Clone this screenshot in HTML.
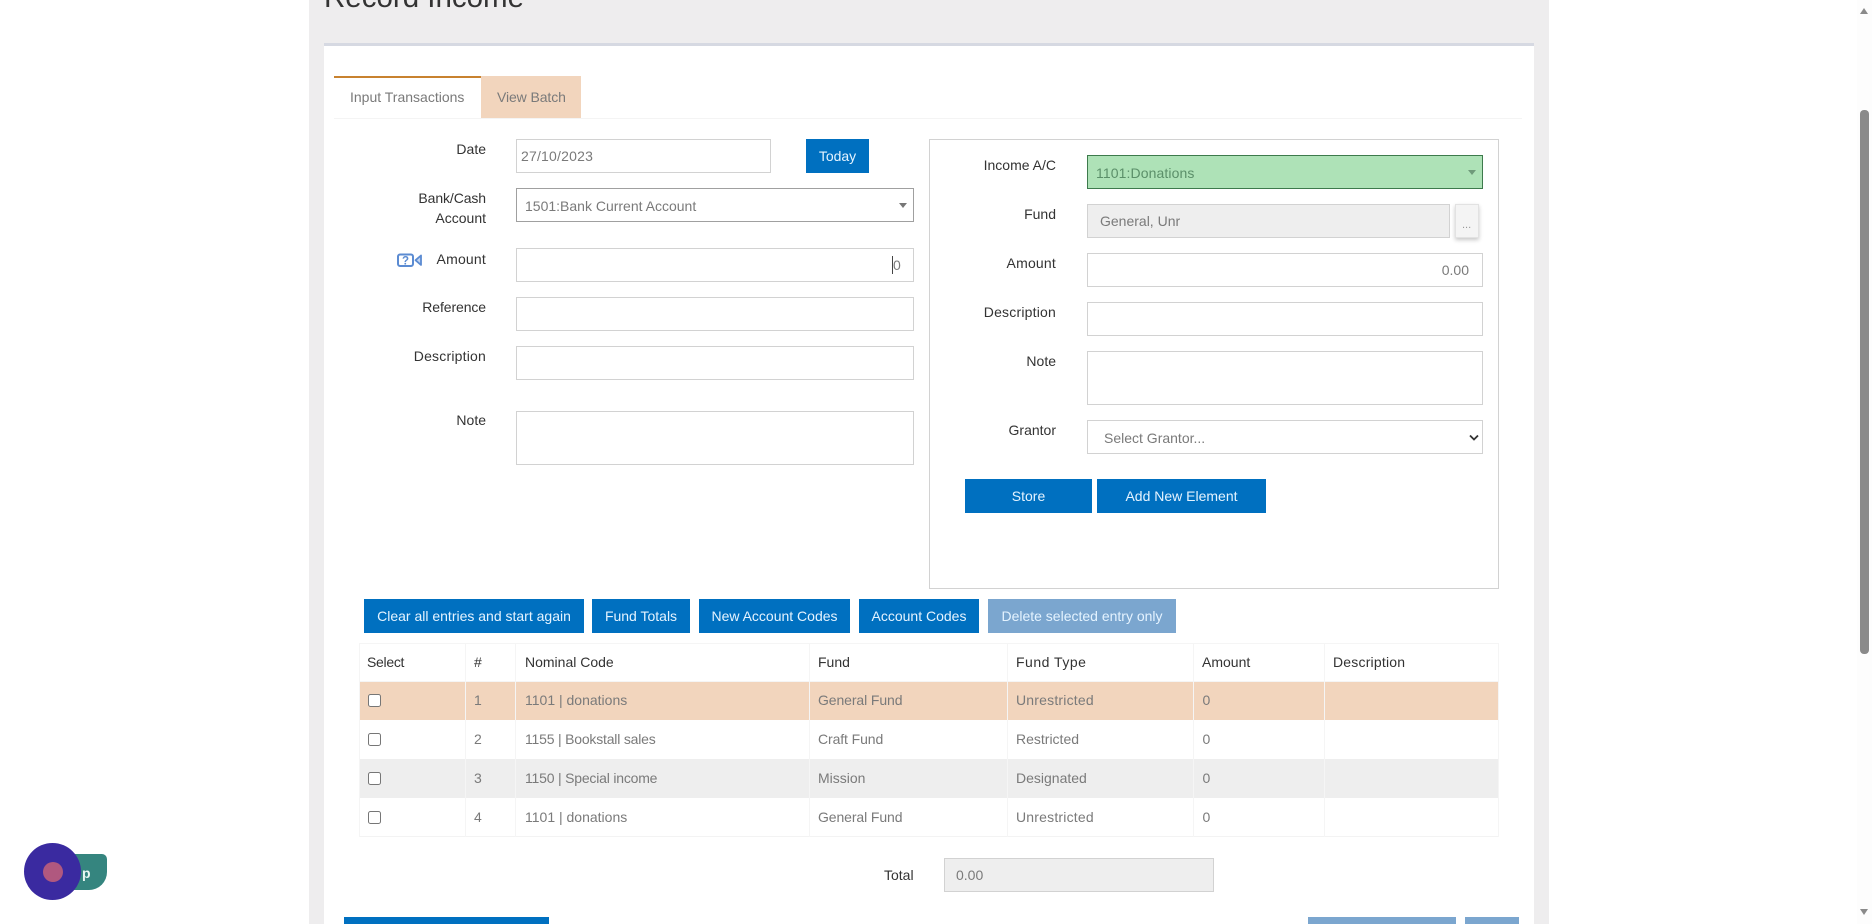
<!DOCTYPE html>
<html><head><meta charset="utf-8"><title>Record Income</title>
<style>
html,body{margin:0;padding:0;width:1872px;height:924px;overflow:hidden;background:#fff;font-family:"Liberation Sans",sans-serif}
#p{position:relative;width:1872px;height:924px;overflow:hidden}
#p div,#p span.a{position:absolute;box-sizing:border-box}
.t{white-space:nowrap;font-size:14px;line-height:20px;height:20px;color:#7a7a7a}
.l{color:#333;text-align:right}
.i{background:#fff;border:1px solid #d2d2d2}
.b{background:#0070c0;color:#e4f3ff;font-size:14px;text-align:center;white-space:nowrap}
.d{background:#7ba6cf}
.r{width:1139px;left:359px}
.v{top:643px;height:194px;width:1px;background:#f5f5f5}
.cb{width:13px;height:13px;left:368px;background:#fff;border:1px solid #767676;border-radius:2.5px}
.th{color:#333}
.ar{width:0;height:0;border-left:4px solid transparent;border-right:4px solid transparent;border-top:5px solid #777}
</style></head><body><div id="p">
<div style="left:309px;top:0;width:1240px;height:924px;background:#eeedee"></div>
<div style="left:324px;top:46px;width:1210px;height:878px;background:#fff"></div>
<div style="left:324px;top:43px;width:1210px;height:3px;background:#d6d9e2"></div>
<div class="t" style="left:324px;top:-17px;height:30px;font-size:29.5px;line-height:30px;color:#333">Record Income</div>

<div style="left:334px;top:118px;width:1188px;height:1px;background:#f4f4f4"></div>
<div style="left:334px;top:76px;width:147px;height:2px;background:#c8822f"></div>
<div style="left:481px;top:76px;width:100px;height:42px;background:#f2d5bd"></div>
<div class="t" style="left:350px;top:87px">Input Transactions</div>
<div class="t" style="left:497px;top:87px;letter-spacing:-.1px">View Batch</div>

<div class="t l" style="right:1386px;top:139px">Date</div>
<div class="t l" style="right:1386px;top:188px;letter-spacing:-.1px">Bank/Cash</div>
<div class="t l" style="right:1386px;top:208px">Account</div>
<div class="t l" style="right:1386px;top:249px;letter-spacing:.2px">Amount</div>
<div class="t l" style="right:1386px;top:297px;letter-spacing:-.1px">Reference</div>
<div class="t l" style="right:1386px;top:346px;letter-spacing:.2px">Description</div>
<div class="t l" style="right:1386px;top:410px">Note</div>
<svg style="position:absolute;left:396px;top:252px" width="28" height="16" viewBox="0 0 28 16"><rect x="2" y="2.5" width="15" height="11.5" rx="2" fill="none" stroke="#5b8bd2" stroke-width="2"/><text x="9.5" y="12.5" font-size="11.5" font-weight="bold" font-family="Liberation Sans" text-anchor="middle" fill="#5b8bd2">?</text><path d="M25 3.5V13L19.5 8.2Z" fill="#c4d6f1" stroke="#5b8bd2" stroke-width="1.8" stroke-linejoin="round"/></svg>

<div class="i" style="left:516px;top:139px;width:255px;height:34px"></div>
<div class="t" style="left:521px;top:146px;letter-spacing:.2px">27/10/2023</div>
<div class="b" style="left:806px;top:139px;width:63px;height:34px;line-height:34px">Today</div>
<div class="i" style="left:516px;top:188px;width:398px;height:34px;border-color:#a0a0a0"></div>
<div class="t" style="left:525px;top:196px">1501:Bank Current Account</div>
<div class="ar" style="left:899px;top:203px"></div>
<div class="i" style="left:516px;top:248px;width:398px;height:34px"></div>
<div style="left:892px;top:256px;width:1px;height:18px;background:#444"></div>
<div class="t" style="left:893px;top:255px">0</div>
<div class="i" style="left:516px;top:297px;width:398px;height:34px"></div>
<div class="i" style="left:516px;top:346px;width:398px;height:34px"></div>
<div class="i" style="left:516px;top:411px;width:398px;height:54px"></div>

<div class="i" style="left:929px;top:139px;width:570px;height:450px"></div>
<div class="t l" style="right:816px;top:155px">Income A/C</div>
<div class="t l" style="right:816px;top:204px">Fund</div>
<div class="t l" style="right:816px;top:253px;letter-spacing:.2px">Amount</div>
<div class="t l" style="right:816px;top:302px;letter-spacing:.2px">Description</div>
<div class="t l" style="right:816px;top:351px">Note</div>
<div class="t l" style="right:816px;top:420px">Grantor</div>
<div style="left:1087px;top:155px;width:396px;height:34px;background:#aee2b7;border:1px solid #3d7a4c"></div>
<div class="t" style="left:1096px;top:163px;color:#5b8f69;letter-spacing:.1px">1101:Donations</div>
<div class="ar" style="left:1468px;top:170px;border-top-color:#6f9a7a"></div>
<div class="i" style="left:1087px;top:204px;width:363px;height:34px;background:#eee"></div>
<div class="t" style="left:1100px;top:211px">General, Unr</div>
<div style="left:1455px;top:204px;width:24px;height:34px;background:#f4f4f4;border:1px solid #e2e2e2;box-shadow:0 2px 4px rgba(0,0,0,.22)"></div>
<div class="t" style="left:1462px;top:215px;font-size:11px;color:#999">...</div>
<div class="i" style="left:1087px;top:253px;width:396px;height:34px"></div>
<div class="t" style="right:403px;top:260px">0.00</div>
<div class="i" style="left:1087px;top:302px;width:396px;height:34px"></div>
<div class="i" style="left:1087px;top:351px;width:396px;height:54px"></div>
<div class="i" style="left:1087px;top:420px;width:396px;height:34px"></div>
<div class="t" style="left:1104px;top:428px">Select Grantor...</div>
<svg style="position:absolute;left:1469px;top:434px" width="10" height="7" viewBox="0 0 10 7"><path d="M1 1.5L5 5.5L9 1.5" fill="none" stroke="#333" stroke-width="1.8"/></svg>
<div class="b" style="left:965px;top:479px;width:127px;height:34px;line-height:34px">Store</div>
<div class="b" style="left:1097px;top:479px;width:169px;height:34px;line-height:34px">Add New Element</div>

<div class="b" style="left:364px;top:599px;width:220px;height:34px;line-height:34px">Clear all entries and start again</div>
<div class="b" style="left:592px;top:599px;width:98px;height:34px;line-height:34px">Fund Totals</div>
<div class="b" style="left:699px;top:599px;width:151px;height:34px;line-height:34px">New Account Codes</div>
<div class="b" style="left:859px;top:599px;width:120px;height:34px;line-height:34px">Account Codes</div>
<div class="b d" style="left:988px;top:599px;width:188px;height:34px;line-height:34px">Delete selected entry only</div>

<div class="r" style="top:682px;height:38px;background:#f2d5bd"></div>
<div class="r" style="top:759px;height:39px;background:#eee"></div>
<div class="r" style="top:643px;height:1px;background:#f5f5f5"></div>
<div class="r" style="top:681px;height:1px;background:#f5f5f5"></div>
<div class="r" style="top:836px;height:1px;background:#f3f3f3"></div>
<div class="v" style="left:359px"></div><div class="v" style="left:465px"></div><div class="v" style="left:515px"></div><div class="v" style="left:809px"></div><div class="v" style="left:1007px"></div><div class="v" style="left:1193px"></div><div class="v" style="left:1324px"></div><div class="v" style="left:1498px"></div>

<div class="t th" style="left:367px;top:652px;letter-spacing:-.3px">Select</div>
<div class="t th" style="left:474px;top:652px">#</div>
<div class="t th" style="left:525px;top:652px">Nominal Code</div>
<div class="t th" style="left:818px;top:652px">Fund</div>
<div class="t th" style="left:1016px;top:652px;letter-spacing:.5px">Fund Type</div>
<div class="t th" style="left:1202px;top:652px">Amount</div>
<div class="t th" style="left:1333px;top:652px;letter-spacing:.2px">Description</div>

<div class="cb" style="top:694px"></div><div class="t" style="left:474px;top:690px">1</div><div class="t" style="left:525px;top:690px">1101 | donations</div><div class="t" style="left:818px;top:690px;letter-spacing:-.1px">General Fund</div><div class="t" style="left:1016px;top:690px;letter-spacing:.2px">Unrestricted</div><div class="t" style="left:1202.5px;top:690px">0</div>
<div class="cb" style="top:733px"></div><div class="t" style="left:474px;top:729px">2</div><div class="t" style="left:525px;top:729px;letter-spacing:-.2px">1155 | Bookstall sales</div><div class="t" style="left:818px;top:729px;letter-spacing:-.1px">Craft Fund</div><div class="t" style="left:1016px;top:729px">Restricted</div><div class="t" style="left:1202.5px;top:729px">0</div>
<div class="cb" style="top:772px"></div><div class="t" style="left:474px;top:768px">3</div><div class="t" style="left:525px;top:768px;letter-spacing:-.2px">1150 | Special income</div><div class="t" style="left:818px;top:768px">Mission</div><div class="t" style="left:1016px;top:768px">Designated</div><div class="t" style="left:1202.5px;top:768px">0</div>
<div class="cb" style="top:811px"></div><div class="t" style="left:474px;top:807px">4</div><div class="t" style="left:525px;top:807px">1101 | donations</div><div class="t" style="left:818px;top:807px;letter-spacing:-.1px">General Fund</div><div class="t" style="left:1016px;top:807px;letter-spacing:.2px">Unrestricted</div><div class="t" style="left:1202.5px;top:807px">0</div>

<div class="t th" style="left:884px;top:865px">Total</div>
<div class="i" style="left:944px;top:858px;width:270px;height:34px;background:#eee"></div>
<div class="t" style="left:956px;top:865px">0.00</div>

<div style="left:344px;top:917px;width:205px;height:7px;background:#0070c0"></div>
<div class="d" style="left:1308px;top:917px;width:148px;height:7px"></div>
<div class="d" style="left:1465px;top:917px;width:54px;height:7px"></div>

<div style="left:1857px;top:0;width:15px;height:924px;background:#fdfdfd"></div>
<div style="left:1860px;top:110px;width:9px;height:544px;background:#8a8a8a;border-radius:4px"></div>
<div style="left:1860px;top:8px;width:0;height:0;border-left:4.5px solid transparent;border-right:4.5px solid transparent;border-bottom:6px solid #8a8a8a"></div>
<div style="left:1860px;top:909px;width:0;height:0;border-left:4.5px solid transparent;border-right:4.5px solid transparent;border-top:6px solid #8a8a8a"></div>

<div style="left:60px;top:854px;width:47px;height:36px;background:#35857f;border-radius:0 5px 18px 0"></div>
<div class="t" style="left:82px;top:863px;font-weight:bold;color:#e8f7f3;font-size:14px">p</div>
<div style="left:24px;top:843px;width:57px;height:57px;border-radius:50%;background:#3a2aa0"></div>
<div style="left:42.5px;top:861.5px;width:20px;height:20px;border-radius:50%;background:#b0587f"></div>
</div></body></html>
